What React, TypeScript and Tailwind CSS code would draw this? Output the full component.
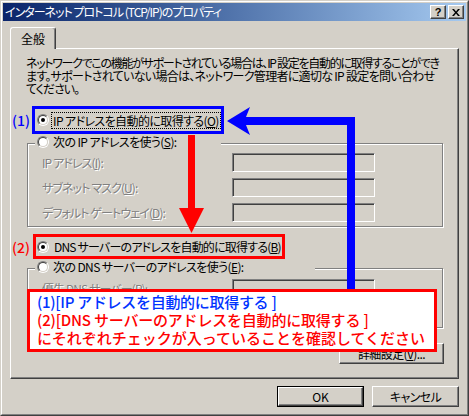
import type { ReactNode } from 'react';

const jp = "whitespace-nowrap [font-feature-settings:'palt'] tracking-[-0.6px]";

function Radio({ checked }: { checked?: boolean }) {
  return (
    <span className="flex h-[12px] w-[12px] shrink-0 rounded-full border border-t-[#808080] border-l-[#808080] border-b-white border-r-white">
      <span className="flex h-full w-full items-center justify-center rounded-full border border-t-[#404040] border-l-[#404040] border-b-[#d4d0c8] border-r-[#d4d0c8] bg-white">
        {checked && <span className="h-[4px] w-[4px] rounded-full bg-black" />}
      </span>
    </span>
  );
}

function Field({ label }: { label?: ReactNode }) {
  return (
    <div className="flex h-[19px] items-center">
      <span className="w-[204px] whitespace-nowrap pl-[14px] text-[#808080] [font-feature-settings:'palt'] tracking-[-0.9px] [text-shadow:1px_1px_0_#fff]">
        {label}
      </span>
      <span className="h-[19px] w-[143px] border border-t-[#808080] border-l-[#808080] border-b-white border-r-white shadow-[inset_1px_1px_0_#404040]" />
    </div>
  );
}

function Btn({ children, width, isDefault }: { children: ReactNode; width: string; isDefault?: boolean }) {
  return (
    <div className={`${width} h-[21px] ${isDefault ? 'border border-black' : ''}`}>
      <div className="flex h-full w-full items-center justify-center border border-t-white border-l-white border-b-[#404040] border-r-[#404040] shadow-[inset_-1px_-1px_0_#808080]">
        {children}
      </div>
    </div>
  );
}

export default function App() {
  return (
    <div className="h-[416px] w-[469px] border border-t-[#d4d0c8] border-l-[#d4d0c8] border-b-[#404040] border-r-[#404040] bg-[#d4d0c8] font-['Noto_Sans_CJK_JP',sans-serif] text-[12px] leading-[14px] text-black">
      <div className="flex h-full flex-col border border-t-white border-l-white border-b-[#808080] border-r-[#808080] p-[1px]">
        {/* title bar */}
        <div className="flex h-[18px] items-center bg-gradient-to-r from-[#0a246a] to-[#a6caf0] pl-[2px] pr-[2px]">
          <span className="flex-1 whitespace-nowrap text-white [font-feature-settings:'palt'] tracking-[-1px]">
            インターネット プロトコル (TCP/IP)のプロパティ
          </span>
          <div className="flex gap-[2px]">
            <div className="flex h-[14px] w-[16px] items-center justify-center border border-t-white border-l-white border-b-[#404040] border-r-[#404040] bg-[#d4d0c8] shadow-[inset_-1px_-1px_0_#808080]">
              <span className="font-['Liberation_Sans',sans-serif] text-[11px] font-bold leading-none">?</span>
            </div>
            <div className="flex h-[14px] w-[16px] items-center justify-center border border-t-white border-l-white border-b-[#404040] border-r-[#404040] bg-[#d4d0c8] shadow-[inset_-1px_-1px_0_#808080]">
              <svg width="8" height="7" viewBox="0 0 8 7">
                <path d="M0 0h2l2 2.5L6 0h2L5 3.5 8 7H6L4 4.5 2 7H0l3-3.5z" fill="#000" />
              </svg>
            </div>
          </div>
        </div>

        <div className="flex flex-col px-[7px] pt-[6px]">
          {/* tab */}
          <div className="relative z-10 -mb-[1px] flex h-[22px] w-[46px] items-center justify-center rounded-t-[3px] border border-b-0 border-t-white border-l-white border-r-[#404040] bg-[#d4d0c8] shadow-[inset_-1px_0_0_#808080]">
            全般
          </div>

          {/* panel */}
          <div className="relative flex h-[331px] w-[449px] flex-col border border-t-white border-l-white border-b-[#404040] border-r-[#404040] shadow-[inset_-1px_-1px_0_#808080]">
            <div className="flex flex-col whitespace-nowrap pl-[15px] pt-[7px] leading-[13px] [font-feature-settings:'palt']">
              <span className="tracking-[-1.3px]">
                ネットワークでこの機能がサポートされている場合は、IP 設定を自動的に取得することができ
              </span>
              <span className="tracking-[-0.7px]">
                ます。サポートされていない場合は、ネットワーク管理者に適切な IP 設定を問い合わせ
              </span>
              <span className="tracking-[-1px]">てください。</span>
            </div>

            {/* (1) */}
            <div className="ml-[1px] mt-[11px] flex items-center">
              <span className="w-[20px] text-[14px] font-medium text-[#0000ff]">(1)</span>
              <div className="flex h-[28px] w-[192px] items-center border-[3px] border-[#0000ff] pl-[2px]">
                <Radio checked />
                <span className={`ml-[3px] px-[1px] leading-[15px] outline outline-1 outline-dotted outline-black ${jp}`}>
                  IP アドレスを自動的に取得する(<u>O</u>)
                </span>
              </div>
            </div>

            {/* group 1 */}
            <div className="relative ml-[16px] mt-[9px] flex w-[416px] flex-col gap-[6px] border border-[#808080] pb-[4px] pt-[9px] shadow-[1px_1px_0_#fff,inset_1px_1px_0_#fff]">
              <div className="absolute -top-[9px] left-[7px] flex h-[14px] w-[186px] items-center bg-[#d4d0c8] pl-[2px]">
                <Radio />
                <span className={`ml-[4px] ${jp}`}>
                  次の IP アドレスを使う(<u>S</u>):
                </span>
              </div>
              <Field label={<>IP アドレス(<u>I</u>):</>} />
              <Field label={<>サブネット マスク(<u>U</u>):</>} />
              <Field label={<>デフォルト ゲートウェイ(<u>D</u>):</>} />
            </div>

            {/* (2) */}
            <div className="ml-[1px] mt-[7px] flex items-center">
              <span className="w-[21px] text-[14px] font-medium text-[#ff0000]">(2)</span>
              <div className="flex h-[25px] w-[252px] items-center border-[3px] border-[#ff0000] pl-[1px]">
                <Radio checked />
                <span className="ml-[5px] whitespace-nowrap [font-feature-settings:'palt'] tracking-[-0.8px]">
                  DNS サーバーのアドレスを自動的に取得する(<u>B</u>)
                </span>
              </div>
            </div>

            {/* group 2 (second row sits entirely under the note) */}
            <div className="relative ml-[16px] mt-[9px] flex w-[416px] flex-col gap-[6px] border border-[#808080] pb-[4px] pt-[10px] shadow-[1px_1px_0_#fff,inset_1px_1px_0_#fff]">
              <div className="absolute -top-[9px] left-[7px] flex h-[14px] w-[280px] items-center bg-[#d4d0c8] pl-[2px]">
                <Radio />
                <span className={`ml-[4px] ${jp}`}>
                  次の DNS サーバーのアドレスを使う(<u>E</u>):
                </span>
              </div>
              <Field label={<>優先 DNS サーバー(<u>P</u>):</>} />
              <Field />
            </div>

            <div className="mr-[14px] mt-[15px] self-end">
              <Btn width="w-[105px]">
                <span className={jp}>
                  詳細設定(<u>V</u>)...
                </span>
              </Btn>
            </div>

            {/* arrows, drawn in window coordinates */}
            <svg
              className="pointer-events-none absolute left-0 top-0"
              width="447"
              height="329"
              viewBox="11 49 447 329"
            >
              <polygon
                points="227,121 250,107 246,117 355,117 355,292 347,292 347,125 246,125 250,135"
                fill="#0000ff"
              />
              <rect x="188" y="135" width="7" height="74" fill="#ff0000" />
              <polygon points="179,208 204,208 191.5,233" fill="#ff0000" />
            </svg>

            {/* note */}
            <div className="absolute left-[16px] top-[240px] flex h-[63px] w-[410px] flex-col whitespace-nowrap border-[3px] border-[#ff0000] bg-white pl-[7px] pt-[1px] text-[15px] font-medium leading-[18px]">
              <span className="text-[#0033ff] tracking-[-0.3px]">(1)[IP アドレスを自動的に取得する ]</span>
              <span className="text-[#ff0000] tracking-[-0.2px]">(2)[DNS サーバーのアドレスを自動的に取得する ]</span>
              <span className="text-[#ff0000]">にそれぞれチェックが入っていることを確認してください</span>
            </div>
          </div>

          {/* dialog buttons */}
          <div className="mt-[7px] flex justify-end gap-[8px]">
            <Btn width="w-[87px]" isDefault>
              OK
            </Btn>
            <Btn width="w-[87px]">
              <span className={jp}>キャンセル</span>
            </Btn>
          </div>
        </div>
      </div>
    </div>
  );
}
